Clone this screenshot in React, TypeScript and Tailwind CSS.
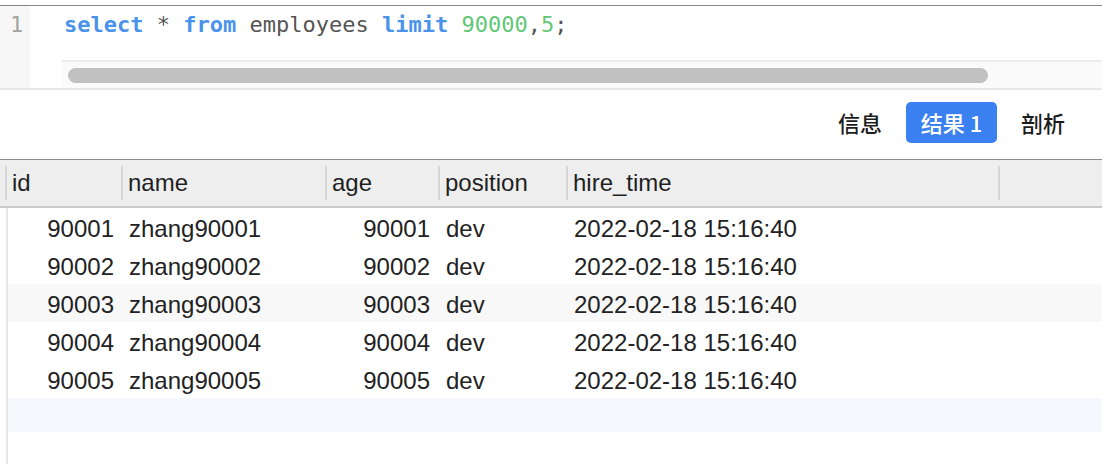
import React from 'react'

const rows = [
  { id: '90001', name: 'zhang90001', age: '90001', position: 'dev', hire: '2022-02-18 15:16:40' },
  { id: '90002', name: 'zhang90002', age: '90002', position: 'dev', hire: '2022-02-18 15:16:40' },
  { id: '90003', name: 'zhang90003', age: '90003', position: 'dev', hire: '2022-02-18 15:16:40' },
  { id: '90004', name: 'zhang90004', age: '90004', position: 'dev', hire: '2022-02-18 15:16:40' },
  { id: '90005', name: 'zhang90005', age: '90005', position: 'dev', hire: '2022-02-18 15:16:40' },
]

const headers = [
  { label: 'id', w: 'w-[116px]' },
  { label: 'name', w: 'w-[204px]' },
  { label: 'age', w: 'w-[113px]' },
  { label: 'position', w: 'w-[128px]' },
  { label: 'hire_time', w: 'w-[432px]' },
  { label: '', w: 'flex-1' },
]

export default function App() {
  return (
    <div className="w-[1102px] h-[464px] overflow-hidden bg-white font-['Liberation_Sans',Arial,sans-serif]">
      {/* EDITOR */}
      <div className="pt-[5px]">
        <div className="flex h-[85px] border-t border-[#858585] border-b-2 border-b-[#e8e8e8]">
          <div className="w-[30px] bg-[#f7f7f7] pt-[4px] pl-[10px] font-['DejaVu_Sans_Mono',monospace] text-[22px] leading-[30px] text-[#a3a3a3]">1</div>
          <div className="flex-1 flex flex-col">
            <div className="h-[54px] pl-[34px] pt-[4px] font-['DejaVu_Sans_Mono',monospace] text-[22px] leading-[30px] text-[#555] whitespace-pre">
              <span className="font-bold text-[#4a93ea]">select</span> * <span className="font-bold text-[#4a93ea]">from</span> employees <span className="font-bold text-[#4a93ea]">limit</span> <span className="text-[#62c676]">90000</span>,<span className="text-[#62c676]">5</span>;
            </div>
            <div className="ml-[32px] h-[28px] bg-[#fafafa] border-t-2 border-[#ececec] flex items-center pl-[6px]">
              <div className="w-[920px] h-[15px] rounded-full bg-[#c1c1c1]" />
            </div>
          </div>
        </div>
      </div>

      {/* TABS */}
      <div className="h-[69px] pb-[4px] flex items-center justify-end pr-[37px] gap-[24px] font-['Noto_Sans_CJK_SC',sans-serif] font-medium text-[22px] text-[#1c1c1c]">
        <span>信息</span>
        <span className="h-[41px] w-[91px] flex items-center justify-center rounded-[5px] bg-[#3a80f0] text-white">结果 1</span>
        <span>剖析</span>
      </div>

      {/* TABLE */}
      <div className="border-t border-[#8a8a8a]">
        <div className="flex h-[48px] bg-[#eeeeee] border-b-2 border-[#cacaca] pl-[5px] text-[24px] text-[#1f1f1f]">
          {headers.map((h, i) => (
            <div key={i} className={`flex items-center ${h.w}`}>
              <span className="w-[2px] h-[34px] bg-[#d5d5d5] shrink-0" />
              <span className="pl-[5px]">{h.label}</span>
            </div>
          ))}
        </div>
        <div className="ml-[6px] border-l-2 border-[#e6e6e6] h-[260px] text-[24px] text-[#222]">
          {rows.map((r, i) => (
            <div key={r.id} className={`flex h-[38px] items-center pt-[3px] ${i === 2 ? 'bg-[#f8f8f8]' : ''}`}>
              <span className="w-[113px] text-right pr-[7px]">{r.id}</span>
              <span className="w-[204px] pl-[8px]">{r.name}</span>
              <span className="w-[113px] text-right pr-[8px]">{r.age}</span>
              <span className="w-[128px] pl-[8px]">{r.position}</span>
              <span className="pl-[8px]">{r.hire}</span>
            </div>
          ))}
          <div className="h-[34px] bg-[#f5f8fd]" />
        </div>
      </div>
    </div>
  )
}
